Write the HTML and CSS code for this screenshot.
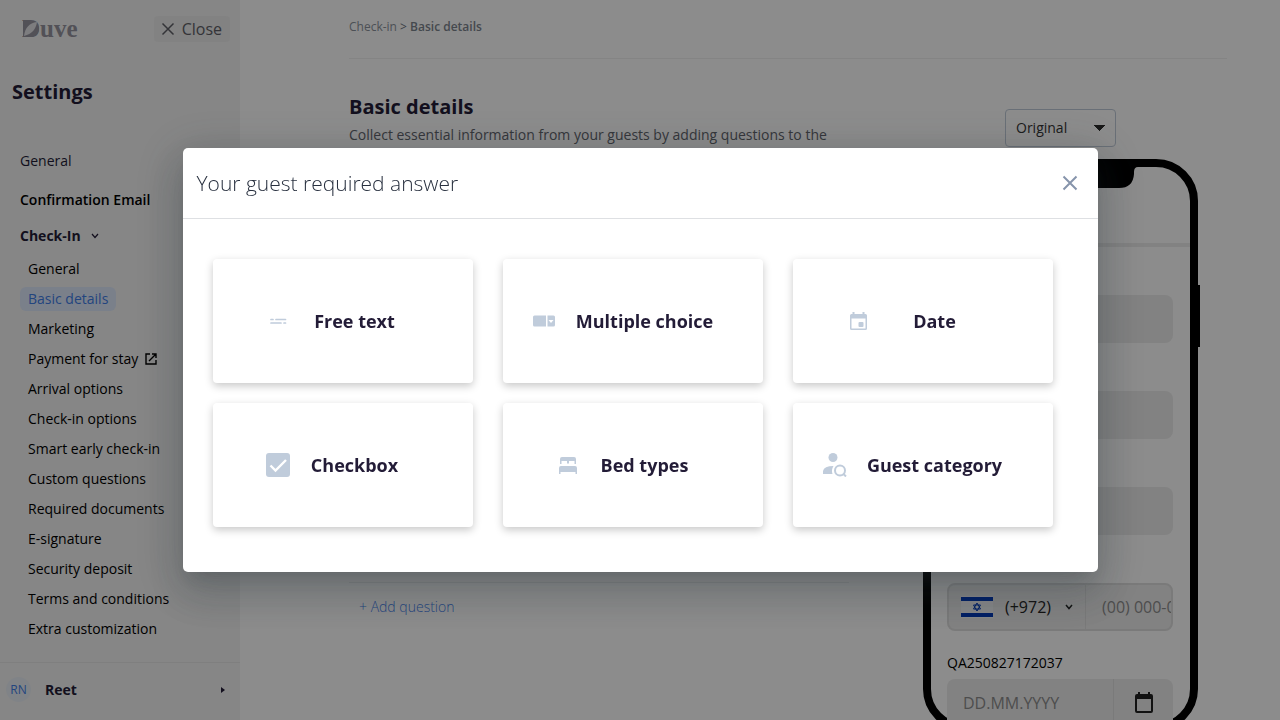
FILE: index.html
```html
<!DOCTYPE html>
<html lang="en">
<head>
<meta charset="utf-8">
<meta name="viewport" content="width=device-width, initial-scale=1">
<title>Basic details - Settings</title>
<link rel="stylesheet" href="styles.css">
</head>
<body>
<div class="app">
  <aside class="sidebar">
    <div class="sidebar-top">
      <svg class="logo" width="64" height="26" viewBox="0 0 64 26" role="img" aria-label="Duve">
        <path class="logo-mark" d="M1 5H8C14 5 17 8 17 13C17 18 13 21 8 21H1Z"/>
        <text class="logo-text" x="0" y="21">Duve</text>
        <path class="logo-cut" d="M2 20C3 12 7 7 15 6C14 13 10 18 2 20Z"/>
      </svg>
      <button class="close-btn" type="button">
        <svg width="14" height="14" viewBox="0 0 14 14"><path d="M1.500 1.500L12.500 12.500M12.500 1.500L1.500 12.500" fill="none" stroke="currentColor" stroke-width="1.500"/></svg>
        Close
      </button>
    </div>
    <h1 class="sidebar-title">Settings</h1>
    <nav class="nav">
      <a class="nav-link" href="#">General</a>
      <a class="nav-link nav-strong" href="#">Confirmation Email</a>
      <button class="nav-group" type="button">Check-In
        <svg width="8" height="6" viewBox="0 0 8 6"><path d="M1 1L4 4.500L7 1" fill="none" stroke="currentColor" stroke-width="1.200"/></svg>
      </button>
      <div class="subnav">
        <a class="sub-link" href="#">General</a>
        <a class="sub-link is-active" href="#">Basic details</a>
        <a class="sub-link" href="#">Marketing</a>
        <a class="sub-link" href="#">Payment for stay
          <svg width="12" height="12" viewBox="0 0 12 12"><path d="M5 1H1V11H11V7M7 1H11V5M11 1L4 8" fill="none" stroke="currentColor" stroke-width="1.400"/></svg>
        </a>
        <a class="sub-link" href="#">Arrival options</a>
        <a class="sub-link" href="#">Check-in options</a>
        <a class="sub-link" href="#">Smart early check-in</a>
        <a class="sub-link" href="#">Custom questions</a>
        <a class="sub-link" href="#">Required documents</a>
        <a class="sub-link" href="#">E-signature</a>
        <a class="sub-link" href="#">Security deposit</a>
        <a class="sub-link" href="#">Terms and conditions</a>
        <a class="sub-link" href="#">Extra customization</a>
      </div>
    </nav>
    <button class="user" type="button">
      <span class="avatar">RN</span>
      <span class="user-name">Reet</span>
      <svg width="4" height="6" viewBox="0 0 4 6"><path d="M0 0L4 3L0 6Z" fill="currentColor"/></svg>
    </button>
  </aside>

  <main class="main">
    <div class="crumbs"><a class="crumb" href="#">Check-in</a> &gt; <span class="crumb-now">Basic details</span></div>
    <div class="content">
      <section class="details">
        <h2 class="details-title">Basic details</h2>
        <p class="details-text">Collect essential information from your guests by adding questions to the</p>
        <div class="questions"></div>
        <button class="add-btn" type="button">+ Add question</button>
      </section>
      <section class="preview">
        <select class="lang" aria-label="Language"><option>Original</option></select>
        <div class="phone">
          <span class="side-key"></span>
          <svg class="notch" width="154" height="22" viewBox="0 0 154 22"><path d="M0 0H154Q150 0 150 5V7Q149 21 135 21H19Q5 21 4 7V5Q4 0 0 0Z"/></svg>
          <div class="phone-bar"></div>
          <div class="fields">
            <div class="field"><input class="box" type="text" aria-label="First name"></div>
            <div class="field"><input class="box" type="text" aria-label="Last name"></div>
            <div class="field"><input class="box" type="email" aria-label="Email"></div>
            <div class="field">
              <div class="box box-phone">
                <button class="dial" type="button">
                  <svg width="32" height="22" viewBox="0 0 32 22"><path fill="#f4f5f8" d="M0 0H32V22H0Z"/><path fill="#0038b8" d="M0 1H32V5H0ZM0 17H32V21H0Z"/><path fill="none" stroke="#0038b8" d="M16 7L19.500 13H12.500ZM16 15L12.500 9H19.500Z"/></svg>
                  <span class="dial-code">(+972)</span>
                  <svg width="8" height="6" viewBox="0 0 8 6"><path d="M1 1L4 4.500L7 1" fill="none" stroke="currentColor" stroke-width="1.500"/></svg>
                </button>
                <input class="plain" type="tel" placeholder="(00) 000-0000" aria-label="Phone number">
              </div>
            </div>
            <div class="field field-labelled">
              <label class="label" for="qa-date">QA250827172037</label>
              <div class="box">
                <input class="plain" id="qa-date" type="text" placeholder="DD.MM.YYYY">
                <button class="cal-btn" type="button" aria-label="Pick a date">
                  <svg width="20" height="22" viewBox="0 0 20 22"><path d="M3 2H17Q19 2 19 4V19Q19 21 17 21H3Q1 21 1 19V4Q1 2 3 2ZM3 7V19H17V7Z" fill="currentColor" fill-rule="evenodd"/><path d="M5 0V4M15 0V4" stroke="currentColor" stroke-width="2"/></svg>
                </button>
              </div>
            </div>
          </div>
        </div>
      </section>
    </div>
  </main>
</div>

<div class="overlay">
  <div class="modal" role="dialog" aria-modal="true" aria-labelledby="modal-title">
    <div class="modal-head">
      <h2 class="modal-title" id="modal-title">Your guest required answer</h2>
      <button class="modal-close" type="button" aria-label="Close dialog">
        <svg width="16" height="16" viewBox="0 0 16 16"><path d="M1.500 1.500L14.500 14.500M14.500 1.500L1.500 14.500" fill="none" stroke="currentColor" stroke-width="2"/></svg>
      </button>
    </div>
    <div class="cards">
      <button class="card" type="button">
        <svg width="24" height="24" viewBox="0 0 24 24"><path d="M5 10.500H7M10 10.500H19.500M5 14H15M18 14H19.500" fill="none" stroke="currentColor" stroke-width="1.700" stroke-linecap="round"/></svg>
        <span class="card-name">Free text</span>
      </button>
      <button class="card" type="button">
        <svg width="24" height="24" viewBox="0 0 24 24"><path fill="currentColor" fill-rule="evenodd" d="M2.500 6.500H14V17.500H2.500Q1 17.500 1 16V8Q1 6.500 2.500 6.500ZM15.500 6.500H21.500Q23 6.500 23 8V16Q23 17.500 21.500 17.500H15.500ZM16.500 11L19 14L21.500 11Z"/></svg>
        <span class="card-name">Multiple choice</span>
      </button>
      <button class="card" type="button">
        <svg width="24" height="24" viewBox="0 0 24 24"><path fill="currentColor" fill-rule="evenodd" d="M6.500 3V5H5.500Q4 5 4 6.500V19.500Q4 21 5.500 21H19.500Q21 21 21 19.500V6.500Q21 5 19.500 5H18.500V3H16.500V5H8.500V3ZM5.500 9.500H19.500V19.500H5.500Z"/><rect x="12.500" y="13" width="5" height="5" rx="1" fill="currentColor"/></svg>
        <span class="card-name">Date</span>
      </button>
      <button class="card" type="button">
        <svg width="24" height="24" viewBox="0 0 24 24"><rect width="24" height="24" rx="3" fill="currentColor"/><path d="M4.500 12.500L9.500 17.500L20 7" fill="none" stroke="#fff" stroke-width="2.400"/></svg>
        <span class="card-name">Checkbox</span>
      </button>
      <button class="card" type="button">
        <svg width="24" height="24" viewBox="0 0 24 24"><path fill="currentColor" d="M4 11V6Q4 4 6 4H18Q20 4 20 6V11H18.500V8H13V10.500H11V8H5.500V11ZM3 21V15Q3 13 5 13H19Q21 13 21 15V21H19.500V19H4.500V21Z"/></svg>
        <span class="card-name">Bed types</span>
      </button>
      <button class="card" type="button">
        <svg width="24" height="24" viewBox="0 0 24 24"><circle cx="10" cy="4.500" r="4.500" fill="currentColor"/><path fill="currentColor" d="M0 21V18Q1 13 10.500 13Q8 17 9.500 21Z"/><path d="M20 20.500L23 23.500" stroke="currentColor" stroke-width="2"/><circle cx="17" cy="17.500" r="5" fill="none" stroke="currentColor" stroke-width="2"/></svg>
        <span class="card-name">Guest category</span>
      </button>
    </div>
  </div>
</div>
</body>
</html>
```
FILE: styles.css
```css
* { box-sizing: border-box; }
body {
  margin: 0;
  height: 100vh;
  overflow: hidden;
  font-family: "Open Sans", "Noto Sans", sans-serif;
  font-size: 14px;
  line-height: 20px;
  color: #000;
  background: #fff;
}
h1, h2, p { margin: 0; }
button, input, select { font: inherit; color: inherit; }
button { margin: 0; padding: 0; border: 0; background: none; text-align: left; }
a { color: inherit; text-decoration: none; }
svg { flex: none; display: block; }

.app { display: flex; height: 100vh; }

/* Sidebar */
.sidebar { flex: none; width: 240px; display: flex; flex-direction: column; background: #f4f4f4; }
.sidebar-top { display: flex; align-items: center; justify-content: space-between; padding: 16px 10px 0 22px; }
.logo-text { font: bold 25px "Liberation Serif", serif; fill: #96949f; }
.logo-mark { fill: #96949f; }
.logo-cut { fill: #e4e4e8; }
.close-btn {
  display: flex; align-items: center; gap: 7px; height: 26px; padding: 0 8px 0 7px;
  border-radius: 4px; background: #ededed; color: #5f6067; font-size: 16px;
}
.sidebar-title { padding: 36px 12px 0; font-size: 20px; line-height: 28px; font-weight: 700; color: #231c37; }
.nav { flex: 1; padding: 45px 0 0 20px; }
.nav-link, .nav-group { display: flex; align-items: center; height: 20px; color: #231c37; }
.nav-link { margin-bottom: 19px; font-weight: 500; }
.nav-strong { margin-bottom: 16px; font-weight: 600; color: #000; }
.nav-group { gap: 10px; font-weight: 700; }
.subnav { display: flex; flex-direction: column; align-items: flex-start; gap: 6px; padding-top: 11px; }
.sub-link { display: flex; align-items: center; gap: 7px; height: 24px; padding: 0 8px; border-radius: 6px; }
.is-active { background: #dfe9fb; color: #3f7ee8; }
.user {
  display: flex; align-items: center; height: 58px; padding: 0 15px 4px 6px;
  border-top: 1px solid #e8e8e8; color: #231c37;
}
.avatar {
  width: 25px; height: 25px; border-radius: 50%; background: #eaeff6;
  color: #3f7ee8; font-size: 12px; line-height: 25px; text-align: center;
}
.user-name { flex: 1; padding-left: 14px; font-weight: 700; }

/* Main column */
.main { flex: 1; min-width: 0; padding: 0 53px 0 109px; }
.crumbs { height: 59px; padding-top: 17px; border-bottom: 1px solid #f0f0f0; font-size: 12px; color: #6e7580; }
.crumb { color: #8b939c; }
.crumb-now { font-weight: 600; color: #7d858e; }
.content { display: flex; justify-content: space-between; }
.details { flex: 0 1 500px; padding-top: 34px; }
.details-title { font-size: 20px; line-height: 28px; font-weight: 700; color: #231c37; }
.details-text { padding-top: 4px; color: #60646c; }
.questions { height: 438px; border-bottom: 1px solid #eeeff1; }
.add-btn { margin: 14px 0 0 10px; font-weight: 300; color: #3f7ee8; }

/* Phone preview */
.preview { flex: none; display: flex; flex-direction: column; align-items: center; width: 275px; margin: 50px 29px 0 0; }
.lang {
  appearance: none; width: 111px; height: 38px; padding: 0 10px; border: 1px solid #c0cbd9; border-radius: 4px;
  background: linear-gradient(45deg, transparent 50%, #2b2b2b 50%) right 15px center / 6px 6px no-repeat,
    linear-gradient(-45deg, transparent 50%, #2b2b2b 50%) right 9px center / 6px 6px no-repeat;
  color: #333;
}
.phone { position: relative; width: 100%; height: 572px; margin-top: 12px; border: 8px solid #000; border-radius: 42px; background: #fff; }
.notch { margin: 0 auto; fill: #000; }
.side-key { position: absolute; top: 118px; right: -10px; width: 2px; height: 62px; background: #000; }
.phone-bar { height: 58px; border-bottom: 4px solid #ededed; }
.fields { padding: 0 17px 0 16px; }
.field { padding-top: 48px; }
.field-labelled { padding-top: 16px; }
.label { display: block; line-height: 32px; }
.box { display: flex; width: 100%; height: 48px; border: 0; border-radius: 8px; background: #ededed; font-size: 16px; overflow: hidden; }
.box-phone { border: 2px solid #dedede; }
.dial { display: flex; align-items: center; padding: 0 12px; border-right: 1px solid #dedede; color: #222; }
.dial-code { padding: 0 14px 0 12px; }
.plain { min-width: 0; flex: 1; border: 0; padding: 0 0 0 16px; background: none; }
.plain::placeholder { color: #8d8d8d; opacity: 1; }
.cal-btn { display: flex; align-items: center; justify-content: center; width: 60px; border-left: 1px solid #dedede; color: #222; }

/* Dialog */
.overlay { position: fixed; inset: 0; display: flex; align-items: center; justify-content: center; padding: 16px; background: rgba(0, 0, 0, .45); }
.modal { width: 100%; max-width: 915px; border-radius: 5px; background: #fff; box-shadow: 0 11px 15px -7px rgba(38, 50, 56, .2), 0 24px 38px 3px rgba(38, 50, 56, .14), 0 9px 46px 8px rgba(38, 50, 56, .2); }
.modal-head { display: flex; align-items: center; justify-content: space-between; height: 71px; padding: 0 20px 0 14px; border-bottom: 1px solid #dee0e3; }
.modal-title { font-size: 21px; line-height: 28px; font-weight: 300; color: #28303f; }
.modal-close { color: #8694ab; }
.cards { display: grid; grid-template-columns: repeat(3, 1fr); gap: 20px 30px; padding: 40px 45px 45px 30px; }
.card {
  display: flex; align-items: center; justify-content: center; height: 124px; border-radius: 4px;
  background: #fff; box-shadow: 0 3px 8px rgba(0, 0, 0, .22); color: #c0ccdb;
}
.card-name { min-width: 130px; padding: 0 20px; text-align: center; font-size: 18px; line-height: 24px; font-weight: 700; color: #231c37; }
```
